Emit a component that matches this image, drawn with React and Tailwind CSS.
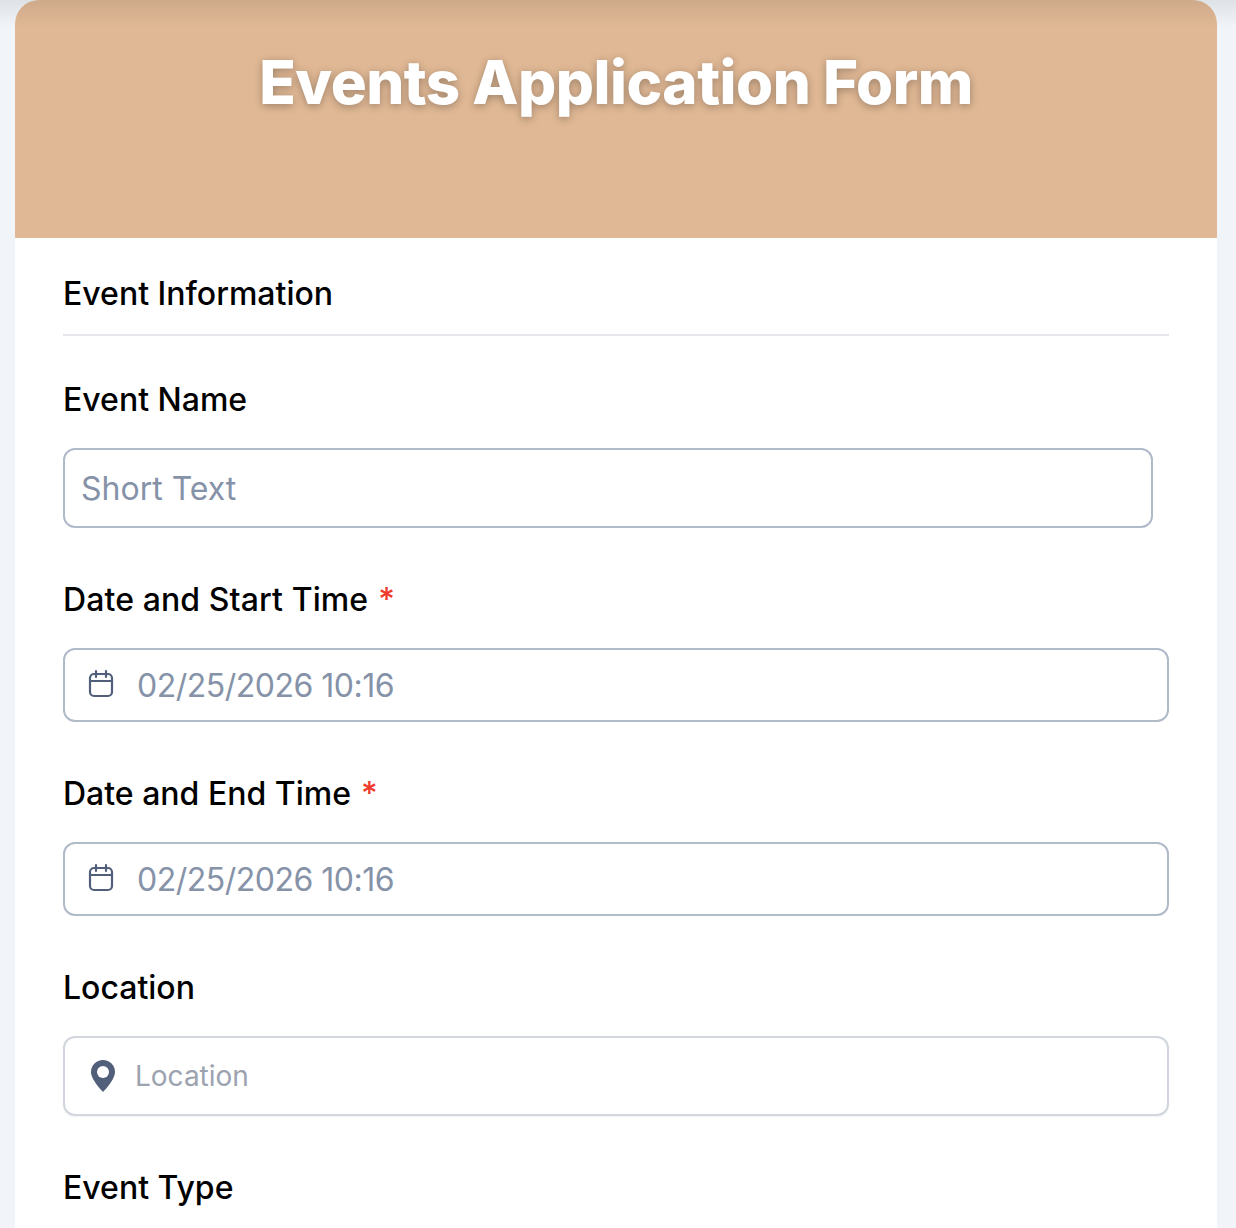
import React from 'react';

const Label = ({ children, required, className = '' }) => (
  <div className={`text-[32px] leading-[40px] font-medium text-black ${className}`}>
    {children}
    {required && <span className="text-[#ef3b2d] ml-[10px]">*</span>}
  </div>
);

const CalendarIcon = () => (
  <svg className="-mt-[2px]" width="28" height="30" viewBox="0 0 28 30" fill="none" stroke="#525f7a" strokeWidth="2.2" strokeLinecap="round">
    <rect x="3" y="5" width="22" height="22" rx="4" />
    <path d="M3 12h22M9 2v6M19 2v6" />
  </svg>
);

const PinIcon = () => (
  <svg width="24" height="32" viewBox="0 0 24 32">
    <path fill="#525f7a" d="M12 0C5.4 0 0 5.4 0 12c0 8 12 20 12 20s12-12 12-20C24 5.4 18.6 0 12 0z" />
    <circle cx="12" cy="12" r="6" fill="white" />
  </svg>
);

const DateField = () => (
  <div className="h-[74px] rounded-[12px] border-2 border-[#b0bac8] bg-white flex items-center pl-[22px]">
    <CalendarIcon />
    <span className="ml-[22px] pt-[2px] text-[32px] tracking-[-0.5px] text-[#8592a8]">02/25/2026 10:16</span>
  </div>
);

export default function App() {
  return (
    <div className="h-[1228px] overflow-hidden bg-[#f1f5f9] pl-[15px] pr-[19px] relative" style={{ fontFamily: 'Inter, sans-serif' }}>
      <div className="h-full bg-white rounded-t-[24px] overflow-hidden">
        <div className="h-[238px] bg-[#e0b895] pt-[44px] text-center">
          <h1 className="text-[60px] leading-[76px] font-extrabold tracking-[-0.5px] text-white [text-shadow:0_2px_8px_rgba(0,0,0,0.3)]">
            Events Application Form
          </h1>
        </div>
        <div className="px-[48px]">
          <div className="h-[98px] pt-[36px] border-b-2 border-[#e5e7eb]">
            <Label>Event Information</Label>
          </div>
          <div className="mt-[44px]">
            <Label>Event Name</Label>
            <div className="mt-[28px] mr-[16px] h-[80px] rounded-[12px] border-2 border-[#b0bac8] flex items-center pl-[16px] pt-[2px] text-[32px] text-[#8592a8]">
              Short Text
            </div>
          </div>
          <div className="mt-[52px]">
            <Label required className="tracking-[0.1px]">Date and Start Time</Label>
            <div className="mt-[28px]"><DateField /></div>
          </div>
          <div className="mt-[52px]">
            <Label required>Date and End Time</Label>
            <div className="mt-[28px]"><DateField /></div>
          </div>
          <div className="mt-[52px]">
            <Label>Location</Label>
            <div className="mt-[28px] h-[80px] rounded-[12px] border-2 border-[#d1d5de] flex items-center pl-[26px] shadow-[0_1px_2px_rgba(0,0,0,0.05)]">
              <PinIcon />
              <span className="ml-[20px] text-[28px] text-[#9ca3af]">Location</span>
            </div>
          </div>
          <div className="mt-[52px]">
            <Label>Event Type</Label>
          </div>
        </div>
      </div>
      <div className="absolute inset-x-0 top-0 h-[28px] bg-gradient-to-b from-[rgba(0,0,0,0.08)] to-transparent" />
    </div>
  );
}
